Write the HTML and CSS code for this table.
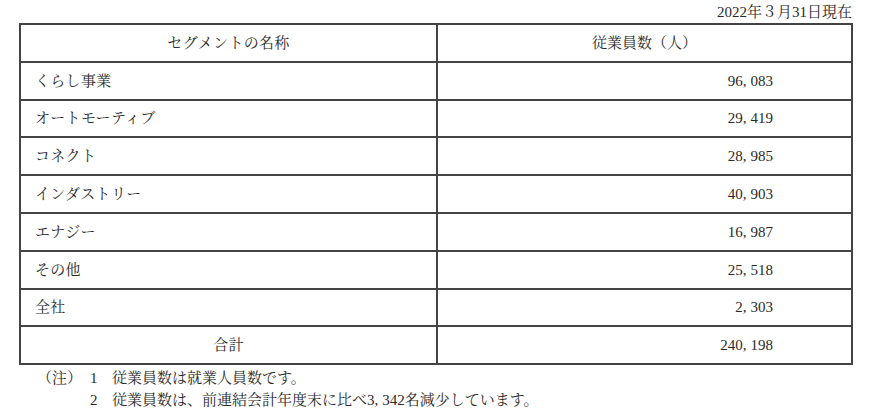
FILE: index.html
```html
<!DOCTYPE html>
<html lang="ja">
<head>
<meta charset="utf-8">
<link rel="stylesheet" href="styles.css">
</head>
<body>
<div class="page">
  <div class="date">2022年３月31日現在</div>
  <table class="tbl">
    <tr class="head"><td class="name c">セグメントの名称</td><td class="num c">従業員数（人）</td></tr>
    <tr><td class="name">くらし事業</td><td class="num">96<span class="cm">,</span>083</td></tr>
    <tr><td class="name">オートモーティブ</td><td class="num">29<span class="cm">,</span>419</td></tr>
    <tr><td class="name">コネクト</td><td class="num">28<span class="cm">,</span>985</td></tr>
    <tr><td class="name">インダストリー</td><td class="num">40<span class="cm">,</span>903</td></tr>
    <tr><td class="name">エナジー</td><td class="num">16<span class="cm">,</span>987</td></tr>
    <tr><td class="name">その他</td><td class="num">25<span class="cm">,</span>518</td></tr>
    <tr><td class="name">全社</td><td class="num">2<span class="cm">,</span>303</td></tr>
    <tr><td class="name c">合計</td><td class="num">240<span class="cm">,</span>198</td></tr>
  </table>
  <div class="notes">
    <div class="lbl">（注）</div><div class="no">1</div><div class="txt">従業員数は就業人員数です。</div>
    <div class="lbl"></div><div class="no">2</div><div class="txt">従業員数は、前連結会計年度末に比べ3<span class="cm">,</span>342名減少しています。</div>
  </div>
</div>
</body>
</html>
```
FILE: styles.css
```css
html, body {
  margin: 0;
  padding: 0;
  background: #fff;
}
body {
  font-family: "Liberation Serif", "Noto Serif CJK JP", "Noto Sans CJK JP", serif;
  font-size: 15px;
  color: #2a2a2a;
}
.page {
  padding-left: 19px;
  width: 834px;
}
.date {
  height: 23px;
  line-height: 25px;
  text-align: right;
  padding-right: 1px;
}
.tbl {
  width: 834px;
  border-collapse: collapse;
  table-layout: fixed;
}
.tbl td {
  border: 2px solid #444;
  height: 35.8px;
  padding: 0;
  line-height: 20px;
  letter-spacing: 0.3px;
}
.tbl td.name {
  width: 401px;
  padding-left: 14px;
}
.tbl td.num {
  text-align: right;
  padding-right: 78px;
  letter-spacing: 0;
}
.tbl td.c {
  text-align: center;
  padding-left: 0;
  padding-right: 0;
}
.tbl td.name.c {
  width: 415px;
  padding-left: 0;
}
.cm {
  margin-right: 4px;
}
.notes {
  display: grid;
  grid-template-columns: 47px 28px 1fr;
  padding-left: 18px;
  margin-top: 2px;
  line-height: 22px;
}
.no {
  padding-left: 6px;
}
```
